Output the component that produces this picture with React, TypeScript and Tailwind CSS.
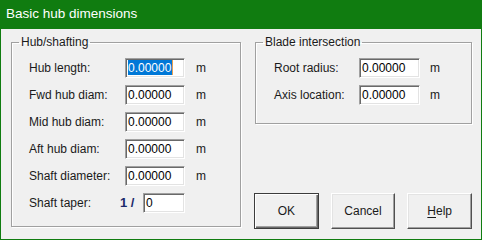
import React from 'react';

const font = { fontFamily: '"Liberation Sans", Arial, sans-serif' };

const Field = ({ value, selected, width = 'w-[60px]' }: { value: string; selected?: boolean; width?: string }) => (
  <div
    className={`${width} h-[20px] bg-white border border-t-[#a0a0a0] border-l-[#a0a0a0] border-r-white border-b-white shadow-[inset_1px_1px_0_#696969,inset_-1px_-1px_0_#e3e3e3] flex items-center pl-[2px] text-[12px] leading-none text-black`}
  >
    {selected ? (
      <span className="bg-[#0078d7] text-white h-[15px] flex items-center pr-[1px] border-r border-[#e8a050]">{value}</span>
    ) : (
      <span>{value}</span>
    )}
  </div>
);

const Row = ({
  label,
  labelWidth,
  value,
  selected,
  inputWidth,
  unitGap,
}: {
  label: string;
  labelWidth: string;
  value: string;
  selected?: boolean;
  inputWidth?: string;
  unitGap: string;
}) => (
  <div className="h-[27px] flex items-center">
    <span className={`${labelWidth} text-[12px] text-[#1a1a1a]`}>{label}</span>
    <Field value={value} selected={selected} width={inputWidth} />
    <span className={`${unitGap} text-[12px] text-[#1a1a1a]`}>m</span>
  </div>
);

const Button = ({ children, isDefault }: { children: React.ReactNode; isDefault?: boolean }) => (
  <button
    className={`h-[36px] w-[65px] flex items-center justify-center text-[12px] text-[#1a1a1a] bg-[#f0f0f0] ${
      isDefault
        ? 'border border-[#3c3c3c] shadow-[inset_1px_1px_0_#fff,inset_-1px_-1px_0_#696969,inset_-2px_-2px_0_#a0a0a0]'
        : 'border border-t-white border-l-white border-r-[#505050] border-b-[#505050] shadow-[inset_-1px_-1px_0_#a0a0a0,inset_1px_1px_0_#e3e3e3]'
    }`}
  >
    {children}
  </button>
);

export default function App() {
  return (
    <div style={font} className="w-[482px] h-[240px] bg-[#107c10] flex flex-col px-[1px] pb-[1px]">
      {/* title bar */}
      <div className="h-[29px] flex items-center pl-[5px] text-white text-[13.5px] shrink-0">Basic hub dimensions</div>

      {/* dialog body */}
      <div className="flex-1 bg-[#f0f0f0] flex pt-[6px] pl-[10px]">
        <fieldset className="w-[230px] h-[192px] border border-[#a0a0a0] shadow-[inset_1px_1px_0_#fff,1px_1px_0_#fff]">
          <legend className="ml-[7px] px-[2px] text-[12px] text-[#1a1a1a] leading-[14px]">Hub/shafting</legend>
          <div className="pl-[17px] pt-[5px]">
            <Row label="Hub length:" labelWidth="w-[96px]" value="0.00000" selected unitGap="ml-[11px]" />
            <Row label="Fwd hub diam:" labelWidth="w-[96px]" value="0.00000" unitGap="ml-[11px]" />
            <Row label="Mid hub diam:" labelWidth="w-[96px]" value="0.00000" unitGap="ml-[11px]" />
            <Row label="Aft hub diam:" labelWidth="w-[96px]" value="0.00000" unitGap="ml-[11px]" />
            <Row label="Shaft diameter:" labelWidth="w-[96px]" value="0.00000" unitGap="ml-[11px]" />
            <div className="h-[27px] flex items-center">
              <span className="w-[91px] text-[12px] text-[#1a1a1a]">Shaft taper:</span>
              <span className="w-[23px] text-[13px] font-bold text-[#1c2a6b]">1 /</span>
              <Field value="0" width="w-[42px]" />
            </div>
          </div>
        </fieldset>

        <div className="ml-[14px] w-[217px] h-[194px] flex flex-col justify-between">
          <fieldset className="w-[217px] h-[89px] border border-[#a0a0a0] shadow-[inset_1px_1px_0_#fff,1px_1px_0_#fff]">
            <legend className="ml-[7px] px-[2px] text-[12px] text-[#1a1a1a] leading-[14px]">Blade intersection</legend>
            <div className="pl-[18px] pt-[5px]">
              <Row label="Root radius:" labelWidth="w-[85px]" value="0.00000" inputWidth="w-[61px]" unitGap="ml-[10px]" />
              <Row label="Axis location:" labelWidth="w-[85px]" value="0.00000" inputWidth="w-[61px]" unitGap="ml-[10px]" />
            </div>
          </fieldset>

          <div className="flex gap-[12px] -ml-[1px]">
            <Button isDefault>OK</Button>
            <Button>Cancel</Button>
            <Button>
              <span>
                <span className="underline underline-offset-2">H</span>elp
              </span>
            </Button>
          </div>
        </div>
      </div>
    </div>
  );
}
